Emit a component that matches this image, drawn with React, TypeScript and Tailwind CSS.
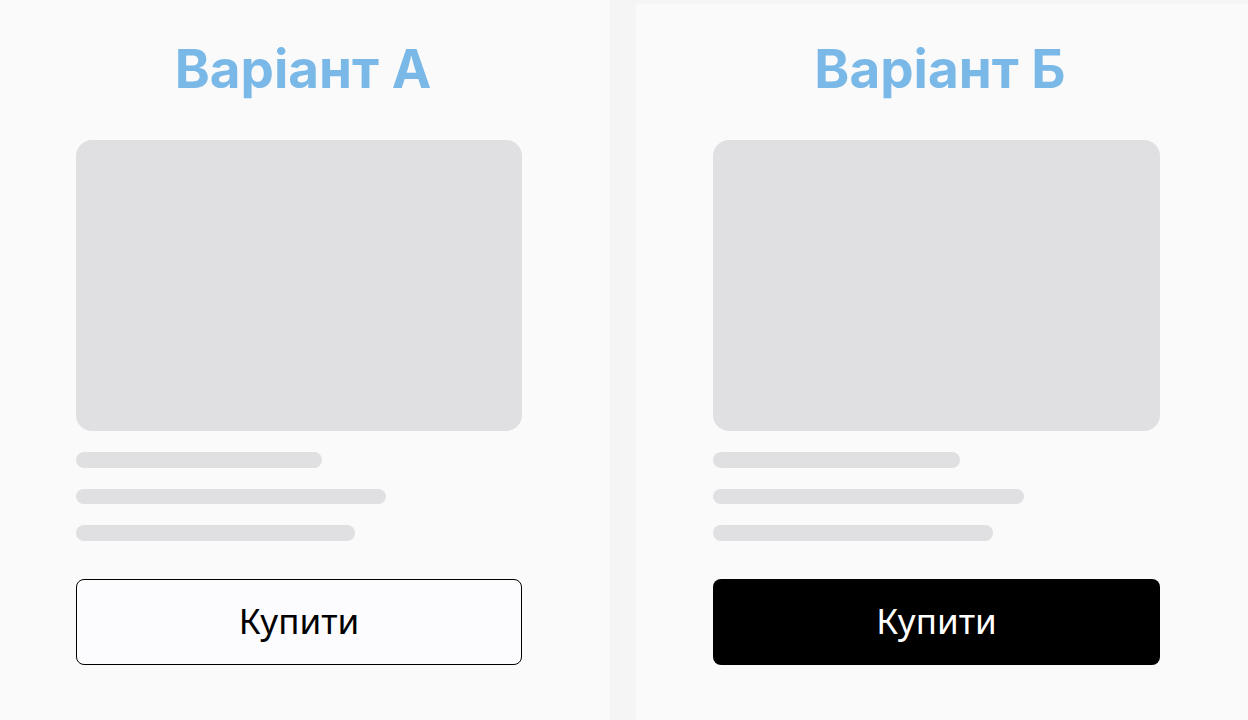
const lines: Record<'a' | 'b', number[]> = {
  a: [246, 310, 279],
  b: [247, 311, 280],
}

function Variant({ title, variant }: { title: string; variant: 'a' | 'b' }) {
  const filled = variant === 'b'
  return (
    <section
      className={`flex h-full flex-col bg-[#fafafb] ${
        filled ? 'w-[612px] border-t-4 border-[#f5f5f6] pt-[38.5px]' : 'w-[610px] pt-[42.5px]'
      }`}
    >
      <h2 className="pr-1 text-center font-['Inter',sans-serif] text-[53px] font-bold leading-none text-[#7ab9e7]">
        {title}
      </h2>
      <div className={`mt-[44.5px] flex flex-col ${filled ? 'ml-[77px] w-[447px]' : 'ml-[76px] w-[446px]'}`}>
        <div className="h-[291px] rounded-2xl bg-[#e0dfe1]" />
        <div className="mt-[21px] flex flex-col gap-[21px]">
          {lines[variant].map((w, i) => (
            <div key={i} className="h-[15.5px] rounded-full bg-[#e0dfe1]" style={{ width: w }} />
          ))}
        </div>
        <button
          className={`mt-[38px] h-[86px] rounded-lg font-['Noto_Sans',sans-serif] text-[35px] ${
            filled ? 'bg-black text-white' : 'border border-black bg-[#fcfbfd] text-black'
          }`}
        >
          Купити
        </button>
      </div>
    </section>
  )
}

export default function App() {
  return (
    <div className="flex h-[720px] w-[1248px] justify-between overflow-hidden bg-[#f5f5f6]">
      <Variant title="Варіант А" variant="a" />
      <Variant title="Варіант Б" variant="b" />
    </div>
  )
}
